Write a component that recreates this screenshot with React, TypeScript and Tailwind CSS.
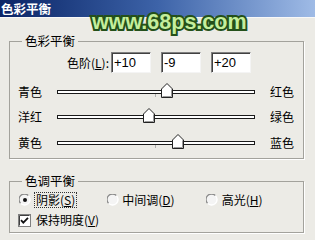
import React from 'react';

const FONT = '"Noto Sans CJK SC", "Liberation Sans", sans-serif';

// sunken windows-style text box
const NumBox: React.FC<{ value: string }> = ({ value }) => (
  <div className="w-[40px] h-[21px] bg-white border-t border-l border-[#808080] border-r-[#f4f4f4] border-b-[#f4f4f4] border-r border-b shadow-[inset_1px_1px_0_#404040] pl-[2px] text-[13px] leading-[20px] text-black font-['Liberation_Sans',sans-serif]">
    {value}
  </div>
);

const Thumb: React.FC<{ left: number }> = ({ left }) => (
  <svg
    width="12"
    height="15"
    viewBox="0 0 12 15"
    className="absolute top-[-8px]"
    style={{ left: left - 6 }}
  >
    <path d="M0.5 14.5 V6 L6 0.5 L11.5 6 V14.5 Z" fill="#ffffff" stroke="#222" strokeWidth="1" />
    <path d="M1.5 13.5 V6.4" stroke="#fff" />
    <path d="M10.5 6.4 V13.5 H1.5" stroke="#9a9a9a" fill="none" />
  </svg>
);

const SliderRow: React.FC<{ left: string; right: string; thumb: number; tick?: boolean }> = ({ left, right, thumb, tick }) => (
  <div className="flex items-center h-[25.5px] pl-[8px]">
    <span className="w-[39px] text-[12px] leading-none">{left}</span>
    <div className="relative w-[198px] h-[4px] border border-[#1a1a1a] bg-white">
      {tick && <div className="absolute left-[97px] top-[3px] w-px h-[3px] bg-[#b0b0b0]" />}
      <Thumb left={thumb} />
    </div>
    <span className="ml-[15px] text-[12px] leading-none">{right}</span>
  </div>
);

const Radio: React.FC<{ checked?: boolean }> = ({ checked }) => (
  <svg width="12" height="12" viewBox="0 0 12 12" className="shrink-0">
    <circle cx="6" cy="6" r="5.5" fill="#f4f4f4" />
    <path d="M1.6 9.4 A5 5 0 0 1 9.4 1.6" stroke="#8a8a8a" strokeWidth="1.3" fill="none" />
    <path d="M9.4 1.6 A5 5 0 0 1 1.6 9.4" stroke="#ffffff" strokeWidth="1.3" fill="none" />
    {checked && <circle cx="6" cy="6" r="2" fill="#111" />}
  </svg>
);

export default function App() {
  return (
    <div
      className="relative w-[315px] h-[240px] overflow-hidden bg-[#ecebe6] text-black"
      style={{ fontFamily: FONT }}
    >
      {/* title bar */}
      <div className="h-[17px] bg-gradient-to-r from-[#0b2466] via-[#3d63a8] to-[#9fbbe6] pl-[1px] text-[12.5px] font-bold leading-[17px] text-white">
        色彩平衡
      </div>
      <div className="h-[1px] bg-[#f8f8f8]" />

      <div className="px-[9px] pt-[16px]">
        {/* colour balance */}
        <fieldset className="w-[295px] h-[125px] border border-[#a3a29c] shadow-[1px_1px_0_#ffffff]">
          <legend className="ml-[12px] px-[3px] text-[12.5px] leading-[14px]">色彩平衡</legend>
          <div className="flex items-center mt-[4px] h-[21px]">
            <span className="w-[101px] text-right text-[12px] leading-none pr-[2px]">
              色阶(<span className="underline">L</span>):
            </span>
            <div className="flex gap-[10px]">
              <NumBox value="+10" />
              <NumBox value="-9" />
              <NumBox value="+20" />
            </div>
          </div>
          <div className="mt-[6px]">
            <SliderRow left="青色" right="红色" thumb={109} tick />
            <SliderRow left="洋红" right="绿色" thumb={91} />
            <SliderRow left="黄色" right="蓝色" thumb={120} tick />
          </div>
        </fieldset>

        {/* tone balance */}
        <fieldset className="mt-[15px] w-[295px] h-[59px] border border-[#a3a29c] shadow-[1px_1px_0_#ffffff]">
          <legend className="ml-[12px] px-[3px] text-[12.5px] leading-[14px]">色调平衡</legend>
          <div className="flex items-center h-[18px] mt-[3px] pl-[9px] text-[12px]">
            <Radio checked />
            <span className="ml-[3px] px-[1px] border border-dotted border-[#333] leading-[14px]">
              阴影(<span className="underline">S</span>)
            </span>
            <span className="ml-[30px]"><Radio /></span>
            <span className="ml-[3px] leading-[14px]">中间调(<span className="underline">D</span>)</span>
            <span className="ml-[31px]"><Radio /></span>
            <span className="ml-[4px] leading-[14px]">高光(<span className="underline">H</span>)</span>
          </div>
          <div className="flex items-center h-[16px] mt-[3px] pl-[8px] text-[12px]">
            <svg width="13" height="13" viewBox="0 0 13 13" className="shrink-0">
              <rect x="0.5" y="0.5" width="12" height="12" fill="#fff" stroke="#808080" />
              <path d="M1.5 11.5 V1.5 H11.5" stroke="#404040" fill="none" />
              <path d="M3 6.2 L5.3 8.6 L10 3.8" stroke="#111" strokeWidth="1.8" fill="none" />
            </svg>
            <span className="ml-[5px] leading-[14px]">保持明度(<span className="underline">V</span>)</span>
          </div>
        </fieldset>
      </div>

      {/* watermark */}
      <div className="absolute left-[92px] top-[10px] text-[21.5px] font-bold leading-[24px] text-[#c4ee9c] font-['Liberation_Sans',sans-serif] [-webkit-text-stroke:4px_#24501a] [paint-order:stroke_fill]">
        www.68ps.com
      </div>
    </div>
  );
}
